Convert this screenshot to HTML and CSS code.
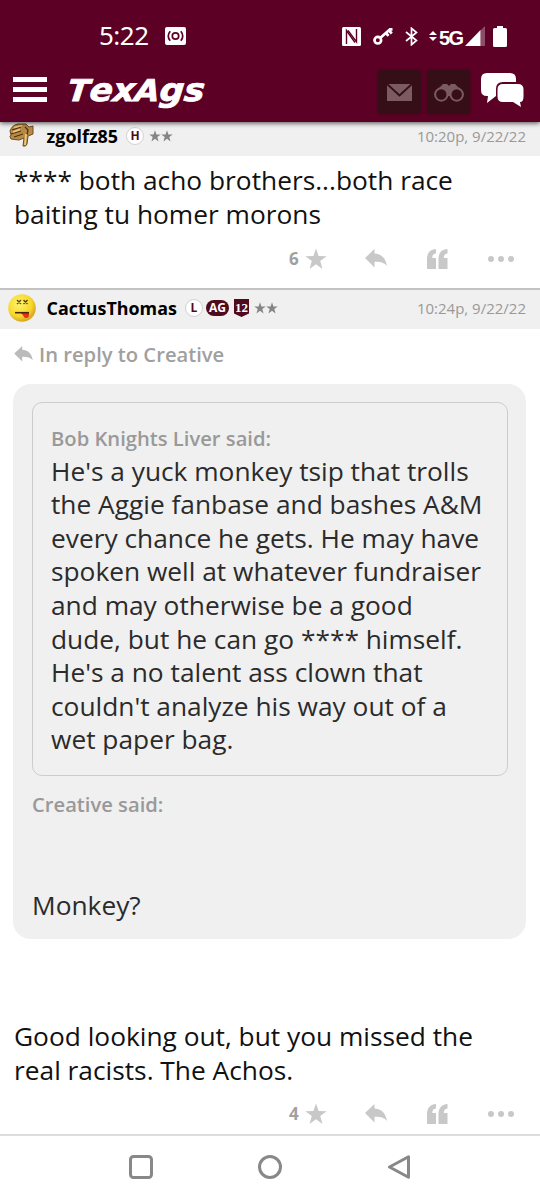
FILE: index.html
```html
<!DOCTYPE html>
<html lang="en">
<head>
    <meta charset="UTF-8">
    <meta name="viewport" content="width=device-width, initial-scale=1.0">
    <title>TexAgs</title>
    <link rel="stylesheet" href="styles.css">
</head>
<body>
    <svg class="defs" width="0" height="0">
        <symbol id="star" viewBox="0 0 22 22"><path d="M11 0.5l2.6 7.6 8 .1-6.4 4.8 2.3 7.9L11 16.2l-6.5 4.7 2.3-7.9L.4 8.200l8-.1z"/></symbol>
        <symbol id="reply" viewBox="0 0 22 19"><path d="M0 9L9.500 0v4.600C16 5 20.500 8.500 22 17c-3.500-3.600-7-4.300-12.500-4.100V18.500z"/></symbol>
        <symbol id="quote" viewBox="0 0 21 20"><path d="M9 0v4.500c-2.700.3-3.700 1.600-3.700 4.600H9V20H0V10C0 4 3 .5 9 0zM20.500 0v4.500c-2.700.3-3.700 1.600-3.700 4.600h3.700V20h-9V10c0-6 3-9.500 9-10z"/></symbol>
    </svg>

    <header class="top">
        <div class="status-bar">
            <span class="clock">5:22</span>
            <svg class="cast" width="21" height="18" viewBox="0 0 21 18">
                <rect width="21" height="18" rx="2" fill="#fff"/>
                <g fill="none" stroke="#5c0025" stroke-width="1.700">
                    <circle cx="10.500" cy="9" r="3.200"/>
                    <path d="M5.200 4.200Q1.300 9 5.200 13.800M15.800 4.200Q19.700 9 15.800 13.800"/>
                </g>
            </svg>
            <div class="status-icons">
                <svg width="19" height="19" viewBox="0 0 19 19">
                    <rect width="19" height="19" rx="1.500" fill="#fff"/>
                    <path d="M4.500 17V3.500l8.500 12" fill="none" stroke="#5c0025" stroke-width="1.400"/>
                    <path d="M6 3.500l8.500 11.500V2" fill="none" stroke="#5c0025" stroke-width="1.400"/>
                </svg>
                <svg class="key" width="20" height="19" viewBox="0 0 20 19">
                    <g fill="none" stroke="#fff" stroke-width="2.700">
                        <circle cx="4.800" cy="13.200" r="3.300"/>
                        <path d="M7.500 10.800L17 2.300h2.500M13 6l2.500 2.800M16 3.500l2.800 3"/>
                    </g>
                </svg>
                <svg class="bluetooth" width="13" height="19" viewBox="0 0 13 19">
                    <path d="M1 5l10.500 8.500-5 4.200V1.300l5 4.200L1 14" fill="none" stroke="#fff" stroke-width="1.700"/>
                </svg>
                <svg class="data" width="8" height="10" viewBox="0 0 8 10"><path d="M0 4L4 0l4 4zM0 6h8l-4 4z" fill="#fff"/></svg>
                <span class="network">5G</span>
                <svg class="signal" width="20" height="20" viewBox="0 0 20 20">
                    <path d="M15.500 4.500L20 0v20h-4.500z" fill="#8e4d67"/>
                    <path d="M0 20L15.500 4v16z" fill="#fff"/>
                </svg>
                <svg class="battery" width="14" height="21" viewBox="0 0 14 21"><path d="M4 0h6v2h2.500Q14 2 14 3.500v16Q14 21 12.500 21h-11Q0 21 0 19.500v-16Q0 2 1.500 2H4z" fill="#fff"/></svg>
            </div>
        </div>
        <div class="app-bar">
            <div class="menu"><i></i><i></i><i></i></div>
            <svg class="logo" width="150" height="44" viewBox="0 0 150 44">
                <text x="5" y="31" textLength="137" lengthAdjust="spacingAndGlyphs" transform="translate(3) skewX(-6)">T<tspan class="low">ex</tspan>A<tspan class="low">gs</tspan></text>
            </svg>
            <div class="tools">
                <div class="tool">
                    <svg width="25" height="17" viewBox="0 0 25 17">
                        <path d="M0 0h25v17H0z" fill="#7b5a60"/>
                        <path d="M0 0l12.500 11.500L25 0" fill="none" stroke="#360e17" stroke-width="2"/>
                    </svg>
                </div>
                <div class="tool">
                    <svg width="30" height="19" viewBox="0 0 30 19">
                        <path d="M2 8L9 1h4l2 2 2-2h4l7 7-9 5h-8z" fill="#7b5a60"/>
                        <g fill="#360e17" stroke="#7b5a60" stroke-width="2">
                            <circle cx="7.300" cy="11.500" r="6.200"/>
                            <circle cx="22.700" cy="11.500" r="6.200"/>
                        </g>
                    </svg>
                </div>
                <svg class="chat" width="43" height="35" viewBox="0 0 43 35">
                    <path d="M6 0h23q6 0 6 6v3H22q-7 0-7 7v7l-9 7 1-7H6q-6 0-6-6V6q0-6 6-6z" fill="#fff"/>
                    <path d="M22 11h15q5.500 0 5.500 5.500v7q0 5.500-3.500 5.500l1 5-8-5H22q-5.500 0-5.500-5.500v-7Q16.500 11 22 11z" fill="#fff"/>
                </svg>
            </div>
        </div>
    </header>

    <main>
        <article class="post">
            <div class="post-head first">
                <svg class="avatar" width="28" height="28" viewBox="0 0 28 28">
                    <path d="M2 9Q4 3 10 2h8l3 3 4-1v8l-5 2-1 8q-1 3-4 2l1-8-5 2-8-1q-2-3 0-4z" fill="#b98a45" stroke="#6b4d24" stroke-width="1"/>
                    <path d="M4 8l9-3M3 12l10-3M6 15l9-3M17 5l3 3-1 5" fill="none" stroke="#4b3418" stroke-width="1.300"/>
                    <path d="M6 5.500l8-2M5 10l7-2.500M18 12l-1 11" stroke="#eccb78" stroke-width="1.800"/>
                </svg>
                <span class="user">zgolfz85</span>
                <span class="badge round">H</span>
                <span class="rank"><svg width="12" height="12"><use href="#star"/></svg><svg width="12" height="12"><use href="#star"/></svg></span>
                <time>10:20p, 9/22/22</time>
            </div>
            <p class="text">**** both acho brothers...both race<br>baiting tu homer morons</p>
            <div class="actions">
                <b>6</b>
                <svg class="like" width="22" height="22"><use href="#star"/></svg>
                <svg class="reply" width="22" height="19"><use href="#reply"/></svg>
                <svg class="cite" width="21" height="20"><use href="#quote"/></svg>
                <span class="dots"><i></i><i></i><i></i></span>
            </div>
        </article>

        <article class="post">
            <div class="post-head">
                <svg class="avatar" width="28" height="28" viewBox="0 0 28 28">
                    <defs>
                        <radialGradient id="face" cx="40%" cy="35%" r="65%">
                            <stop offset="0" stop-color="#fff46a"/>
                            <stop offset=".7" stop-color="#f5d62c"/>
                            <stop offset="1" stop-color="#d9a520"/>
                        </radialGradient>
                    </defs>
                    <circle cx="14" cy="14" r="13.800" fill="url(#face)"/>
                    <path d="M9 6l4 4m0-4l-4 4M15.500 6l4 4m0-4l-4 4" stroke="#59480f" stroke-width="1.400"/>
                    <path d="M13 19h8v2q0 3-3 3-2 0-2.500-2z" fill="#df3515"/>
                    <path d="M7 18.700h14" stroke="#4d2209" stroke-width="1.600"/>
                </svg>
                <span class="user">CactusThomas</span>
                <span class="badge round">L</span>
                <span class="badge ag">AG</span>
                <svg class="badge-12" width="15" height="18" viewBox="0 0 15 18">
                    <path d="M0 0h15v14.500L7.500 18 0 14.500z" fill="#500a1c"/>
                    <text x="7.500" y="12.500" text-anchor="middle">12</text>
                </svg>
                <span class="rank"><svg width="12" height="12"><use href="#star"/></svg><svg width="12" height="12"><use href="#star"/></svg></span>
                <time>10:24p, 9/22/22</time>
            </div>
            <div class="reply-to">
                <svg width="19" height="16"><use href="#reply"/></svg>
                <span>In reply to Creative</span>
            </div>
            <div class="quote">
                <div class="quote-inner">
                    <div class="said">Bob Knights Liver said:</div>
                    <p>He's a yuck monkey tsip that trolls<br>the Aggie fanbase and bashes A&amp;M<br>every chance he gets. He may have<br>spoken well at whatever fundraiser<br>and may otherwise be a good<br>dude, but he can go **** himself.<br>He's a no talent ass clown that<br>couldn't analyze his way out of a<br>wet paper bag.</p>
                </div>
                <div class="said">Creative said:</div>
                <p class="answer">Monkey?</p>
            </div>
            <p class="text last">Good looking out, but you missed the<br>real racists. The Achos.</p>
            <div class="actions last">
                <b>4</b>
                <svg class="like" width="22" height="22"><use href="#star"/></svg>
                <svg class="reply" width="22" height="19"><use href="#reply"/></svg>
                <svg class="cite" width="21" height="20"><use href="#quote"/></svg>
                <span class="dots"><i></i><i></i><i></i></span>
            </div>
        </article>
    </main>

    <nav class="nav-bar">
        <svg width="24" height="24" viewBox="0 0 24 24"><rect x="1.500" y="1.500" width="21" height="21" rx="3"/></svg>
        <svg width="24" height="24" viewBox="0 0 24 24"><circle cx="12" cy="12" r="10.500"/></svg>
        <svg width="24" height="24" viewBox="0 0 24 24"><path d="M2.500 12L21.500 1.700v20.600z"/></svg>
    </nav>
</body>
</html>
```
FILE: styles.css
```css
* {
    box-sizing: border-box;
}

body {
    margin: 0;
    width: 540px;
    height: 1200px;
    overflow: hidden;
    display: flex;
    flex-direction: column;
    background: #fff;
    color: #111;
    font-family: "Open Sans", sans-serif;
}

p {
    margin: 0;
    font-size: 26.3px;
    line-height: 33.6px;
    white-space: nowrap;
}

svg {
    flex: none;
}

.defs {
    position: absolute;
}

.top {
    flex: none;
    height: 122px;
    background: #5c0025;
    color: #fff;
    box-shadow: 0 1px 5px rgba(0, 0, 0, 0.7);
    z-index: 1;
}

.status-bar {
    height: 62px;
    padding: 10px 33px 0 99px;
    display: flex;
    align-items: center;
}

.clock {
    width: 50px;
    margin-top: -2px;
    font-family: "Noto Sans", sans-serif;
    font-size: 26px;
    letter-spacing: -0.5px;
}

.cast {
    margin-left: 16px;
}

.status-icons {
    margin-left: auto;
    display: flex;
    align-items: center;
}

.key {
    margin-left: 12px;
}

.bluetooth {
    margin-left: 12px;
}

.data {
    margin: 0 2px 0 11px;
}

.network {
    font-family: "Liberation Sans", sans-serif;
    font-weight: bold;
    font-size: 20px;
    letter-spacing: -1.5px;
    line-height: 20px;
    margin-top: 4px;
    width: 22px;
}

.signal {
    margin-left: 4px;
}

.battery {
    margin-left: 8px;
}

.app-bar {
    height: 60px;
    padding: 0 16px 0 13px;
    display: flex;
    align-items: center;
}

.menu {
    width: 34px;
    display: flex;
    flex-direction: column;
    gap: 5px;
    margin-top: -6px;
}

.menu i {
    height: 5px;
    background: #fff;
}

.logo {
    margin: 0 0 0 15px;
}

.logo text {
    font-family: "DejaVu Sans", sans-serif;
    font-weight: 700;
    font-style: italic;
    font-size: 30px;
    fill: #fff;
    stroke: #fff;
    stroke-width: 0.8px;
}

.logo .low {
    font-size: 32px;
}

.tools {
    margin-left: auto;
    display: flex;
    align-items: center;
    gap: 6px;
}

.tool {
    width: 43px;
    height: 44px;
    border-radius: 3px;
    background: #360e17;
    box-shadow: 0 0 3px #360e17;
    display: flex;
    align-items: center;
    justify-content: center;
}

.chat {
    margin: -3px 0 0 5px;
}

.post {
    display: flex;
    flex-direction: column;
}

.post-head {
    height: 41px;
    border-top: 2px solid #c2c2c2;
    background: #f0f0f0;
    padding: 0 14px 3px 8px;
    display: flex;
    align-items: center;
}

.post-head.first {
    height: 34px;
    border-top: 0;
    padding-bottom: 6px;
}

.user {
    margin-left: 10.6px;
    color: #000;
    font-weight: 700;
    font-size: 17.9px;
}

.badge {
    height: 18px;
    margin-left: 8px;
    font-size: 12px;
    font-weight: 700;
    line-height: 16px;
    text-align: center;
    color: #500a1c;
}

.round {
    width: 18px;
    border: 1px solid #d2d2d2;
    border-radius: 50%;
    background: #fff;
}

.ag {
    width: 23px;
    height: 16px;
    margin-left: 3px;
    border-radius: 8px;
    background: #500a1c;
    color: #fff;
}

.badge-12 {
    margin-left: 5px;
}

.badge-12 text {
    font-family: "Liberation Serif", serif;
    font-size: 13px;
    font-weight: bold;
    fill: #fff;
}

.rank {
    margin-left: 5px;
    display: flex;
    fill: #858585;
}

time {
    margin-left: auto;
    font-size: 15px;
    color: #999;
}

.text {
    padding: 8px 0 0 14px;
    color: #111;
}

.actions {
    height: 57px;
    padding: 0 26px 2px 289px;
    display: flex;
    align-items: center;
    fill: #c8c8c8;
}

.actions.last {
    height: 47px;
    padding-top: 6px;
    padding-bottom: 0;
}

.actions b {
    width: 10px;
    font-size: 17px;
    color: #a0a0a0;
}

.like {
    margin-left: 6px;
}

.reply {
    margin-left: 38px;
}

.cite {
    margin-left: 40px;
}

.dots {
    margin-left: auto;
    display: flex;
    gap: 4px;
}

.dots i {
    width: 6px;
    height: 6px;
    border-radius: 50%;
    background: #c8c8c8;
}

.reply-to {
    height: 55px;
    padding: 0 0 5px 14px;
    display: flex;
    align-items: center;
    gap: 6px;
    font-size: 20.2px;
    font-weight: 600;
    color: #a0a0a0;
    fill: #bbb;
}

.quote {
    margin: 0 14px 0 13px;
    height: 555px;
    padding: 18px 18px 18px 19px;
    border-radius: 18px;
    background: #f0f0f0;
    color: #2b2b2b;
}

.quote-inner {
    height: 374px;
    padding: 18.4px 18px;
    border: 1px solid #ccc;
    border-radius: 10px;
}

.said {
    height: 33px;
    line-height: 33px;
    font-size: 20.2px;
    font-weight: 600;
    color: #999;
}

.quote > .said {
    margin-top: 12px;
}

.answer {
    margin-top: 68px;
}

.text.last {
    padding-top: 81px;
}

.nav-bar {
    margin-top: auto;
    height: 66px;
    border-top: 2px solid #ddd;
    display: flex;
    justify-content: center;
    align-items: center;
    gap: 105px;
    padding-bottom: 2px;
    fill: none;
    stroke: #888;
    stroke-width: 3;
    stroke-linejoin: round;
}
```
